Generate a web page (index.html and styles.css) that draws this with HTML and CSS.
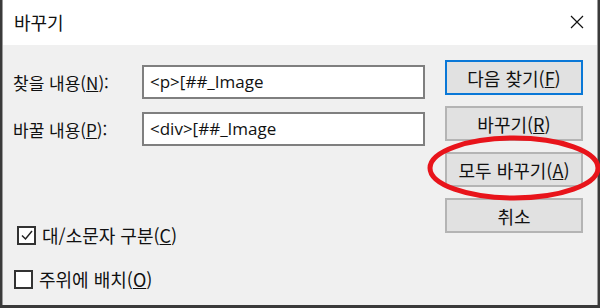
FILE: index.html
```html
<!DOCTYPE html>
<html lang="ko">
<head>
    <meta charset="UTF-8">
    <title>바꾸기</title>
    <link rel="stylesheet" href="styles.css">
</head>
<body>
    <div class="window">
        <header class="titlebar">
            <span class="title">바꾸기</span>
            <svg class="close" width="14" height="14" viewBox="0 0 14 14">
                <path d="M1 1 L13 13 M13 1 L1 13" stroke="#111" stroke-width="1.2" fill="none"/>
            </svg>
        </header>

        <main class="content">
            <div class="fields">
                <div class="grid">
                    <label class="label" for="find">찾을 내용(<u>N</u>):</label>
                    <div class="input" id="find">&lt;p&gt;[##_Image</div>

                    <label class="label" for="replace">바꿀 내용(<u>P</u>):</label>
                    <div class="input" id="replace">&lt;div&gt;[##_Image</div>
                </div>

                <div class="checks">
                    <div class="check first">
                        <span class="box">
                            <svg width="14" height="14" viewBox="0 0 14 14">
                                <path d="M2 7.5 L5.5 11 L12 3" stroke="#222" stroke-width="1.5" fill="none"/>
                            </svg>
                        </span>
                        <span>대/소문자 구분(<u>C</u>)</span>
                    </div>
                    <div class="check second">
                        <span class="box"></span>
                        <span>주위에 배치(<u>O</u>)</span>
                    </div>
                </div>
            </div>

            <div class="buttons">
                <button class="btn default">다음 찾기(<u>F</u>)</button>
                <button class="btn">바꾸기(<u>R</u>)</button>
                <button class="btn">모두 바꾸기(<u>A</u>)</button>
                <button class="btn">취소</button>
            </div>
        </main>

        <!-- red highlight drawn over the dialog -->
        <svg class="mark" width="180" height="72" viewBox="0 0 180 72">
            <ellipse cx="90" cy="36" rx="84" ry="30" stroke="#e8141b" stroke-width="5" fill="none"/>
        </svg>
    </div>
</body>
</html>
```

FILE: styles.css
```css
body {
    margin: 0;
    padding: 0;
    background: #3a3a3a;
    font-family: "Noto Sans CJK KR", "Noto Sans", sans-serif;
    color: #111;
}

.window {
    position: relative;
    width: 594px;
    height: 305px;
    margin-left: 2px;
    border-left: 1px solid #9a9a9a;
    border-right: 1px solid #9a9a9a;
    background: #f0f0f0;
    display: flex;
    flex-direction: column;
}

.titlebar {
    height: 45px;
    background: #ffffff;
    display: flex;
    align-items: center;
    justify-content: space-between;
    padding: 0 13px 0 11px;
}

.title {
    font-size: 18px;
    margin-top: -2px;
}

.close {
    margin-top: -2px;
}

.content {
    flex: 1;
    display: flex;
    padding: 15px 14px 0 10px;
}

.fields {
    flex: 1;
    padding-top: 5px;
}

.grid {
    display: grid;
    grid-template-columns: 129px 283px;
    row-gap: 13px;
    align-items: center;
}

.label {
    font-size: 17px;
}

.input {
    box-sizing: border-box;
    height: 34px;
    border: 2px solid #7f7f7f;
    background: #ffffff;
    padding: 0 6px;
    font-family: "Open Sans", "Noto Sans", sans-serif;
    font-size: 17px;
    line-height: 30px;
    white-space: nowrap;
}

.checks {
    margin-top: 79px;
    display: flex;
    flex-direction: column;
    gap: 24px;
    font-size: 18px;
}

.check {
    display: flex;
    align-items: center;
    gap: 6px;
    height: 20px;
}

.check.first {
    padding-left: 4px;
}

.check.second {
    padding-left: 1px;
}

.box {
    box-sizing: border-box;
    width: 19px;
    height: 19px;
    border: 2px solid #333;
    background: #ffffff;
    display: flex;
    align-items: center;
    justify-content: center;
}

.buttons {
    width: 138px;
    display: flex;
    flex-direction: column;
    gap: 11px;
}

.btn {
    box-sizing: border-box;
    height: 35px;
    border: 2px solid #b4b4b4;
    background: #e1e1e1;
    font-family: "Noto Sans CJK KR", sans-serif;
    font-size: 18px;
    color: #111;
    padding: 0;
}

.btn.default {
    border-color: #0a78d7;
}

.mark {
    position: absolute;
    left: 421px;
    top: 132px;
}
```
